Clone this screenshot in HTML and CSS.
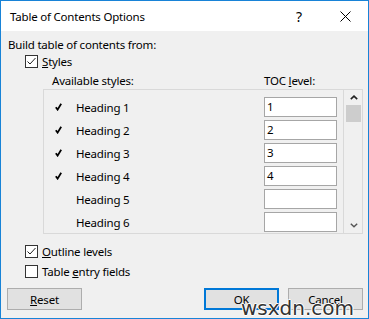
FILE: index.html
```html
<!DOCTYPE html>
<html lang="en">
<head>
    <meta charset="UTF-8">
    <title>Table of Contents Options</title>
    <link rel="stylesheet" href="styles.css">
</head>
<body>
    <div class="dialog">
        <div class="titlebar">
            <span class="title">Table of Contents Options</span>
            <span class="help">?</span>
            <span class="close">
                <svg width="11" height="11" viewBox="0 0 11 11"><path d="M0.5 0.5 L10.5 10.5 M10.5 0.5 L0.5 10.5" stroke="#000" stroke-width="1" fill="none"/></svg>
            </span>
        </div>

        <div class="content">
            <div class="caption">Build table of contents from:</div>

            <div class="check-row styles-row">
                <span class="box"><svg width="13" height="13" viewBox="0 0 13 13"><path d="M2.5 6.5 L5 9 L10.5 3" stroke="#222" stroke-width="1" fill="none"/></svg></span>
                <span><u>S</u>tyles</span>
            </div>

            <div class="list-head">
                <span class="avail">Available styles:</span>
                <span>TOC <u>l</u>evel:</span>
            </div>

            <div class="list">
                <div class="rows">
                    <div class="row"><span class="mark"><svg width="7" height="8" viewBox="0 0 7 8"><path d="M0.8 4.2 L2.6 6.6 L6.2 0.8" stroke="#000" stroke-width="1.8" fill="none"/></svg></span><span>Heading 1</span><span class="level">1</span></div>
                    <div class="row"><span class="mark"><svg width="7" height="8" viewBox="0 0 7 8"><path d="M0.8 4.2 L2.6 6.6 L6.2 0.8" stroke="#000" stroke-width="1.8" fill="none"/></svg></span><span>Heading 2</span><span class="level">2</span></div>
                    <div class="row"><span class="mark"><svg width="7" height="8" viewBox="0 0 7 8"><path d="M0.8 4.2 L2.6 6.6 L6.2 0.8" stroke="#000" stroke-width="1.8" fill="none"/></svg></span><span>Heading 3</span><span class="level">3</span></div>
                    <div class="row"><span class="mark"><svg width="7" height="8" viewBox="0 0 7 8"><path d="M0.8 4.2 L2.6 6.6 L6.2 0.8" stroke="#000" stroke-width="1.8" fill="none"/></svg></span><span>Heading 4</span><span class="level">4</span></div>
                    <div class="row"><span class="mark"></span><span>Heading 5</span><span class="level"></span></div>
                    <div class="row"><span class="mark"></span><span>Heading 6</span><span class="level"></span></div>
                </div>
                <div class="scrollbar">
                    <span class="arrow"><svg width="8" height="5" viewBox="0 0 8 5"><path d="M0.8 4.2 L4 1.2 L7.2 4.2" stroke="#222" stroke-width="1.6" fill="none"/></svg></span>
                    <span class="thumb"></span>
                    <span class="track"></span>
                    <span class="arrow down"><svg width="8" height="5" viewBox="0 0 8 5"><path d="M0.8 0.8 L4 3.8 L7.2 0.8" stroke="#555" stroke-width="1.4" fill="none"/></svg></span>
                </div>
            </div>

            <div class="check-row option-row">
                <span class="box"><svg width="13" height="13" viewBox="0 0 13 13"><path d="M2.5 6.5 L5 9 L10.5 3" stroke="#222" stroke-width="1" fill="none"/></svg></span>
                <span><u>O</u>utline levels</span>
            </div>
            <div class="check-row option-row">
                <span class="box"></span>
                <span>Table <u>e</u>ntry fields</span>
            </div>

            <div class="buttons">
                <button class="btn"><u>R</u>eset</button>
                <span class="spacer"></span>
                <button class="btn default">OK</button>
                <button class="btn">Cancel</button>
            </div>
        </div>

        <div class="watermark">wsxdn.com</div>
    </div>
</body>
</html>
```

FILE: styles.css
```css
body {
    margin: 0;
    font-family: "Noto Sans", "Liberation Sans", sans-serif;
    font-size: 11.5px;
    letter-spacing: -0.2px;
    color: #000;
}
.dialog {
    position: relative;
    width: 369px;
    height: 319px;
    box-sizing: border-box;
    border: 1px solid #1883d7;
    background-color: #f0f0f0;
    overflow: hidden;
}
.titlebar {
    display: flex;
    align-items: center;
    height: 30px;
    padding-left: 9px;
    background-color: #fff;
}
.title {
    flex: 1;
}
.help {
    width: 10px;
    margin-right: 34px;
    font-size: 14px;
}
.close {
    display: flex;
    margin-right: 17px;
}
.content {
    padding: 0 5px 0 7px;
}
.caption {
    margin-top: 6px;
    line-height: 15px;
}
.check-row {
    display: flex;
    align-items: center;
    gap: 4px;
    margin-left: 17px;
}
.styles-row {
    height: 18px;
}
.option-row {
    height: 20px;
}
.box {
    display: flex;
    width: 11px;
    height: 11px;
    border: 1px solid #333;
    background-color: #fff;
}
.box svg {
    margin: -1px;
}
.list-head {
    display: flex;
    padding: 3px 0 1px 44px;
    line-height: 15px;
}
.avail {
    width: 212px;
}
.list {
    display: flex;
    margin: 0 0 7px 35px;
    height: 143px;
    border: 1px solid #d9d9d9;
}
.rows {
    display: flex;
    flex-direction: column;
    gap: 3px;
    width: 299px;
    padding-top: 7px;
    border-right: 1px solid #d9d9d9;
}
.row {
    display: flex;
    align-items: center;
    height: 20px;
}
.mark {
    display: flex;
    width: 21px;
    margin-left: 11px;
}
.level {
    width: 69px;
    height: 18px;
    margin-left: auto;
    margin-right: 6px;
    padding-left: 2px;
    line-height: 18px;
    border: 1px solid #a6a6a6;
    background-color: #fff;
}
.scrollbar {
    display: flex;
    flex-direction: column;
    width: 18px;
}
.arrow {
    display: flex;
    justify-content: center;
    padding: 5px 0 0 1px;
    height: 10px;
}
.arrow.down {
    padding-top: 3px;
}
.thumb {
    height: 17px;
    margin: 0 1px 0 2px;
    background-color: #cdcdcd;
}
.track {
    flex: 1;
}
.buttons {
    display: flex;
    gap: 9px;
    margin: 7px 0 0 -1px;
}
.spacer {
    flex: 1;
}
.btn {
    width: 75px;
    height: 22px;
    padding: 0;
    font-family: inherit;
    font-size: 11.5px;
    letter-spacing: -0.2px;
    color: #000;
    background-color: #e1e1e1;
    border: 1px solid #adadad;
}
.btn.default {
    border: 2px solid #0078d7;
}
.watermark {
    position: absolute;
    left: 240px;
    top: 297px;
    font-family: "DejaVu Sans", sans-serif;
    font-size: 20px;
    line-height: 20px;
    letter-spacing: 0;
    color: #333;
    text-shadow: 1px 0 #fff, -1px 0 #fff, 0 1px #fff, 0 -1px #fff;
}
```
